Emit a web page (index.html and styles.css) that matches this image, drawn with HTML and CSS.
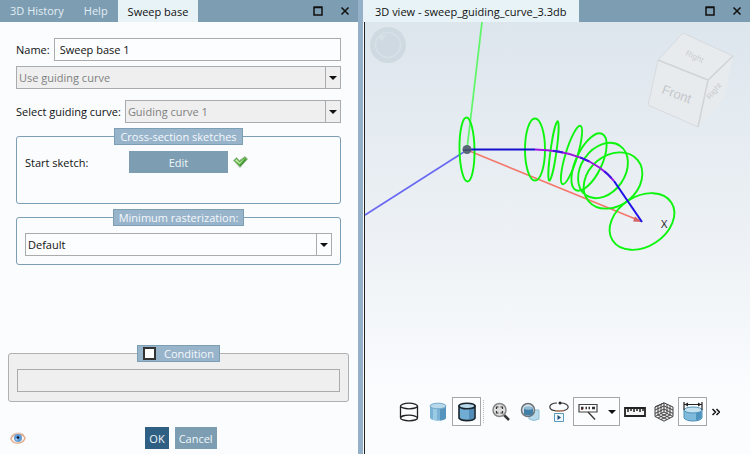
FILE: index.html
```
<!DOCTYPE html>
<html lang="en">

<head>
    <meta charset="UTF-8">
    <meta name="viewport" content="width=device-width, initial-scale=1.0">
    <title>Sweep base</title>
    <link rel="stylesheet" href="styles.css">
</head>

<body>
    <!-- Settings panel -->
    <section class="panel">
        <header class="tab-bar">
            <button class="tab">3D History</button>
            <button class="tab">Help</button>
            <button class="tab active">Sweep base</button>
            <div class="window-actions">
                <button class="window-btn" aria-label="Maximize">
                    <svg width="10" height="10" viewBox="0 0 10 10"><path d="M1 1.5H9V9H1ZM0.500 1H9.500" /></svg>
                </button>
                <button class="window-btn" aria-label="Close">
                    <svg width="10" height="10" viewBox="0 0 10 10"><path d="M1.500 1.500L8.500 8.500M8.500 1.500L1.500 8.500" /></svg>
                </button>
            </div>
        </header>

        <form class="form">
            <div class="row name-row">
                <label for="name">Name:</label>
                <input class="field" type="text" id="name" value="Sweep base 1">
            </div>

            <div class="combo">
                <select class="field" aria-label="Mode" disabled>
                    <option>Use guiding curve</option>
                </select>
                <span class="arrow"></span>
            </div>

            <div class="row curve-row">
                <label for="curve">Select guiding curve:</label>
                <div class="combo">
                    <select class="field" id="curve" disabled>
                        <option>Guiding curve 1</option>
                    </select>
                    <span class="arrow"></span>
                </div>
            </div>

            <fieldset class="group sketches">
                <legend>Cross-section sketches</legend>
                <div class="row">
                    <span class="sketch-label">Start sketch:</span>
                    <button type="button" class="btn edit-btn">Edit</button>
                    <svg class="check" width="15" height="12" viewBox="0 0 15 12">
                        <path d="M0.500 4.500L3.500 1.500L6.500 4.500L12 0.500L14.500 3L7 11.500Z" fill="#58ad45" stroke="#a4bd9e" />
                        <path d="M2 4.500L3.500 3L6.500 6.500L12 2L8 6.500L6.500 8Z" fill="#c5eaa9" />
                        <path d="M7 10L13 3.500" stroke="#34872c" fill="none" />
                    </svg>
                </div>
            </fieldset>

            <fieldset class="group raster">
                <legend id="rasterLabel">Minimum rasterization:</legend>
                <div class="combo">
                    <select class="field" aria-labelledby="rasterLabel">
                        <option>Default</option>
                    </select>
                    <span class="arrow"></span>
                </div>
            </fieldset>
        </form>

        <fieldset class="group condition">
            <legend>
                <input type="checkbox" id="condition">
                <label for="condition">Condition</label>
            </legend>
            <input class="field" type="text" aria-label="Condition value" disabled>
        </fieldset>

        <footer class="footer">
            <button class="eye" aria-label="Preview">
                <svg width="16" height="13" viewBox="0 0 16 13">
                    <path d="M0.800 7C3 0.500 12 0.500 15.200 6C12.500 12.500 4 13 0.800 7Z" fill="#fff6ef" stroke="#dfa681" stroke-width="1.300" />
                    <path d="M1 4.500C4 0 11 0 14 3" fill="none" stroke="#dec9bd" />
                    <circle cx="8" cy="6" r="4" fill="#609cd8" />
                    <circle cx="8" cy="5.500" r="1.300" fill="#101827" />
                    <circle cx="6.500" cy="7.500" r="1" fill="#a8cff2" />
                </svg>
            </button>
            <div class="footer-btns">
                <button class="btn ok-btn">OK</button>
                <button class="btn">Cancel</button>
            </div>
        </footer>
    </section>

    <!-- 3D view -->
    <section class="view">
        <header class="tab-bar">
            <button class="tab active">3D view - sweep_guiding_curve_3.3db</button>
            <div class="window-actions">
                <button class="window-btn" aria-label="Maximize">
                    <svg width="10" height="10" viewBox="0 0 10 10"><path d="M1 1.5H9V9H1ZM0.500 1H9.500" /></svg>
                </button>
                <button class="window-btn" aria-label="Close">
                    <svg width="10" height="10" viewBox="0 0 10 10"><path d="M1.500 1.500L8.500 8.500M8.500 1.500L1.500 8.500" /></svg>
                </button>
            </div>
        </header>

        <div class="canvas">
            <svg class="scene" width="385" height="260" viewBox="365 22 385 260">
                <!-- orbit control -->
                <circle cx="388" cy="45" r="18" fill="#ced9e1" />
                <circle cx="388" cy="45" r="12.500" fill="none" stroke="#d7e0e7" stroke-width="1.500" />
                <path d="M378 36L386 35L382 41Z" fill="#d7e0e7" />

                <!-- axes -->
                <path d="M482 22L467 149" stroke="#62f56c" stroke-width="1.800" />
                <path d="M467 150L365 215" stroke="#6868f2" stroke-width="1.600" />
                <path d="M467 150L638 220" stroke="#f4776c" stroke-width="1.600" />
                <path d="M642 222L633 221.500L635 216.500Z" fill="#d86068" />

                <!-- profiles along the curve -->
                <g fill="none" stroke="#0df50d" stroke-width="1.900">
                    <ellipse cx="467" cy="149.500" rx="7.500" ry="32" transform="rotate(-1 467 149.500)" />
                    <ellipse cx="535" cy="149.500" rx="10" ry="31" />
                    <ellipse cx="553.500" cy="151" rx="3" ry="30" transform="rotate(8 553.500 151)" />
                    <ellipse cx="571.500" cy="155" rx="6" ry="30.500" transform="rotate(17 571.500 155)" />
                    <ellipse cx="589" cy="162" rx="13" ry="31" transform="rotate(25 589 162)" />
                    <ellipse cx="603" cy="170.500" rx="22" ry="30" transform="rotate(35 603 170.500)" />
                    <ellipse cx="613" cy="180.500" rx="25" ry="32" transform="rotate(50 613 180.500)" />
                    <ellipse cx="642" cy="221.500" rx="25" ry="35" transform="rotate(57 642 221.500)" />
                </g>

                <!-- guiding curve -->
                <g fill="none" stroke-width="2">
                    <path d="M467 149.500H535" stroke="#1710cf" />
                    <path d="M535 149.500C568 150 597 160 614 181" stroke="#9d17e2" />
                    <path d="M535 149.500C568 150 597 160 614 181" stroke="#3518e2" stroke-dasharray="10 18" stroke-dashoffset="-18" />
                    <path d="M614 181L642 222" stroke="#1c11e8" />
                </g>
                <circle cx="467" cy="149.500" r="4.500" fill="#5b6876" />
                <path d="M463 150H471" stroke="#30366a" />
                <text class="axis-label" x="661" y="228">X</text>
            </svg>

            <svg class="cube" width="90" height="100" viewBox="648 30 90 100">
                <path d="M660 60L685 33L735 56L726 98L700 127L650 105Z" fill="#e8ebee" />
                <path d="M660 60L685 33L735 56M660 60L650 105L700 127" fill="none" stroke="#d7dbdf" />
                <path d="M660 60L710 80L735 56M710 80L700 127" fill="none" stroke="#d0d4d7" stroke-width="1.500" />
                <text class="cube-front" transform="translate(663 93) rotate(20)">Front</text>
                <text class="cube-side" transform="translate(687 55) rotate(25)">Right</text>
                <text class="cube-side" transform="translate(712 100) rotate(-50)">Right</text>
            </svg>

            <div class="toolbar">
                <button class="tool" aria-label="Wireframe">
                    <svg width="20" height="20" viewBox="0 0 20 20" fill="none" stroke="#222" stroke-width="1.300">
                        <path d="M1.500 4V16M18.500 4V16" />
                        <ellipse cx="10" cy="4" rx="8.500" ry="2.800" />
                        <ellipse cx="10" cy="16" rx="8.500" ry="2.800" />
                    </svg>
                </button>
                <button class="tool" aria-label="Shaded">
                    <svg width="20" height="20" viewBox="0 0 20 20">
                        <path d="M2 4V16C4 19.500 16 19.500 18 16V4Z" fill="#79b2d5" />
                        <path d="M12 5H18V16Q17 18 12 18.500Z" fill="#5794bd" />
                        <path d="M5 5H9V18H5Z" fill="#9bcae5" />
                        <ellipse cx="10" cy="4" rx="8" ry="2.800" fill="#b7d9eb" stroke="#76a9c9" />
                    </svg>
                </button>
                <button class="tool selected" aria-label="Shaded with edges">
                    <svg width="20" height="20" viewBox="0 0 20 20">
                        <path d="M2 4V16C4 19.500 16 19.500 18 16V4Z" fill="#71acd2" stroke="#19242c" stroke-width="1.600" />
                        <path d="M12 6H17V16Q16 17 12 17.500Z" fill="#518db8" />
                        <ellipse cx="10" cy="4" rx="8" ry="2.800" fill="#b7d9eb" stroke="#19242c" stroke-width="1.600" />
                    </svg>
                </button>
                <span class="separator"></span>
                <button class="tool" aria-label="Zoom to fit">
                    <svg width="20" height="20" viewBox="0 0 20 20" fill="none">
                        <path d="M12.500 12.500L18 18" stroke="#383838" stroke-width="2.500" />
                        <circle cx="8.500" cy="8" r="6.500" fill="#ddd" stroke="#888" stroke-width="1.500" />
                        <path d="M5.500 7V5H7.500M9.500 5H11.500V7M11.500 9V11H9.500M7.500 11H5.500V9" stroke="#333" stroke-width="1.200" />
                    </svg>
                </button>
                <button class="tool" aria-label="Transparency">
                    <svg width="20" height="20" viewBox="0 0 20 20">
                        <path d="M9 8H19V17Q14 20 9 17Z" fill="#b7d9e9" stroke="#91bfd5" />
                        <circle cx="8" cy="8" r="6.500" fill="#d7e2e8" stroke="#6d7479" stroke-width="1.500" />
                        <path d="M4 6V12Q8 15 13 12V6Z" fill="#427fa7" />
                        <ellipse cx="8.500" cy="6" rx="4.500" ry="1.800" fill="#8fbbd4" />
                    </svg>
                </button>
                <button class="tool" aria-label="Play rotation">
                    <svg width="20" height="22" viewBox="0 0 20 22" fill="none">
                        <path d="M8 2C3 2 0.800 4 0.800 6C0.800 8.500 5 10 10 10C15 10 19.200 8.500 19.200 6C19.200 4 16 2 12 2" stroke="#333" stroke-width="1.200" />
                        <path d="M6 10H15" stroke="#c98a69" stroke-width="1.200" />
                        <circle cx="11" cy="2" r="1.500" fill="#222" />
                        <path d="M5.500 12.500H14.500V20.500H5.500Z" fill="#edf7fc" stroke="#599bc0" />
                        <path d="M8.500 14V19L12 16.500Z" fill="#204d70" />
                    </svg>
                </button>
                <button class="tool wide selected" aria-label="Labels">
                    <svg width="20" height="18" viewBox="0 0 20 18" fill="none">
                        <path d="M1 1.500H19V9H1Z" fill="#fff" stroke="#444" stroke-width="1.200" />
                        <path d="M3 5H5.500M7.500 5H9M10.500 5H12M14 5H17" stroke="#333" stroke-width="2.500" />
                        <path d="M10 9L17 16.500" stroke="#333" stroke-width="1.300" />
                        <path d="M3 6.500H5" stroke="#a54b4b" />
                    </svg>
                    <span class="arrow-down"></span>
                </button>
                <button class="tool" aria-label="Measure">
                    <svg width="22" height="10" viewBox="0 0 22 10">
                        <path d="M1 1H21V9H1Z" fill="#f6f6f6" stroke="#222" stroke-width="1.800" />
                        <path d="M4 1V5M7 1V4M10 1V5M13 1V4M16 1V5M19 1V4" stroke="#222" stroke-width="1.500" />
                    </svg>
                </button>
                <button class="tool" aria-label="Grid">
                    <svg width="20" height="20" viewBox="0 0 20 20" fill="none" stroke="#444">
                        <path d="M10 0.800L19 5V14.500L10 19.200L1 14.500V5Z" fill="#eee" />
                        <path d="M10 1V10M1 14.500L10 10L19 14.500M1 5L10 1M4 3.500V13M7 2V11.500M13 2V11.500M16 3.500V13M1 8L10 4L19 8M1 11.500L10 7L19 11.500M4 16L13 11.500M7 17.500L16 13M7 11.500L16 16M4 13L13 17.500" />
                    </svg>
                </button>
                <button class="tool selected" aria-label="Dimensions">
                    <svg width="20" height="20" viewBox="0 0 20 20">
                        <path d="M1 8V16C3 20 17 20 19 16V8Z" fill="#7ebadb" stroke="#4f91b7" />
                        <path d="M13 10H18.500V15.500Q17 18 13 18.500Z" fill="#4f94bf" />
                        <ellipse cx="10" cy="8" rx="9" ry="3" fill="#c4e2f0" stroke="#4f91b7" />
                        <path d="M1 0V8M19 0V8M1 2.500H19" stroke="#222" stroke-width="1.200" />
                        <path d="M1.500 2.500L5 0.500V4.500ZM18.500 2.500L15 0.500V4.500Z" fill="#222" />
                    </svg>
                </button>
                <button class="tool more" aria-label="More tools">
                    <svg width="8" height="8" viewBox="0 0 8 8" fill="none" stroke="#111" stroke-width="1.500">
                        <path d="M0.500 1L3.500 4L0.500 7M4.500 1L7.500 4L4.500 7" />
                    </svg>
                </button>
            </div>
        </div>
    </section>
</body>

</html>
```
FILE: styles.css
```
* {
    box-sizing: border-box;
}

body {
    margin: 0;
    min-height: 100vh;
    display: grid;
    grid-template-columns: 363fr 387fr;
    font-family: "Open Sans", "Noto Sans", sans-serif;
    font-size: 11px;
    line-height: 15px;
    color: #111;
    background: #fafcfe;
}

button,
input,
select {
    font: inherit;
    color: inherit;
    margin: 0;
}

button {
    border: none;
    padding: 0;
    background: none;
}

.panel {
    display: flex;
    flex-direction: column;
    min-width: 0;
    border-right: 5px solid #95b1ca;
}

.view {
    display: flex;
    flex-direction: column;
    min-width: 0;
}

/* Tabs */
.tab-bar {
    display: flex;
    height: 22px;
    padding-bottom: 1px;
    background: #7c9db2;
}

.tab {
    padding: 0 10px;
    color: #e4eef4;
    white-space: nowrap;
}

.tab.active {
    margin-bottom: -1px;
    background: #e7f3f7;
    color: #111;
}

.view .tab {
    padding: 0 12px;
}

.window-actions {
    display: flex;
    gap: 17px;
    margin-left: auto;
    padding-right: 8px;
}

.window-btn {
    display: flex;
    align-items: center;
}

.window-btn svg {
    fill: none;
    stroke: #111;
    stroke-width: 1.5;
}

/* Form */
.form {
    padding: 16px 17px 0 16px;
}

.row {
    display: flex;
    align-items: center;
}

.name-row {
    gap: 4px;
    margin-bottom: 5px;
}

.curve-row {
    gap: 4px;
    margin-top: 11px;
    margin-bottom: 5px;
}

.field {
    display: block;
    width: 100%;
    min-width: 0;
    height: 23px;
    padding: 0 5px;
    border: 1px solid #a9abad;
    border-radius: 0;
    background: #fcfdfe;
    appearance: none;
}

select.field {
    padding: 0 2px;
}

.field:disabled {
    background: #efefef;
    color: #7f7f7f;
    opacity: 1;
}

.combo {
    position: relative;
    flex: 1;
    min-width: 0;
}

.arrow {
    position: absolute;
    top: 1px;
    right: 1px;
    bottom: 1px;
    width: 15px;
    display: flex;
    align-items: center;
    justify-content: center;
    border-left: 1px solid #a9abad;
    pointer-events: none;
}

.arrow::after,
.arrow-down {
    content: "";
    border: 4px solid transparent;
    border-top-color: #111;
    border-bottom: none;
}

.group {
    min-width: 0;
    margin: 0;
    padding: 0 8px;
    border: 1px solid #7c9fb5;
    border-radius: 3px;
}

.group legend {
    display: flex;
    align-items: center;
    height: 17px;
    margin: 0 auto;
    padding: 0 5px;
    border: 1px solid #7c9fb5;
    background: #98b4cb;
    color: #f4f8fb;
}

.sketches {
    height: 76px;
}

.sketches .row {
    padding-top: 6px;
}

.sketch-label {
    width: 104px;
}

.btn {
    height: 22px;
    padding: 0 4px;
    background: #7c9db2;
    color: #f1f6f9;
}

.edit-btn {
    width: 99px;
}

.check {
    margin-left: 5px;
}

.raster {
    margin-top: 5px;
    padding-bottom: 8px;
}

.raster .combo {
    margin-top: 7px;
}

.condition {
    margin: auto 9px 0 8px;
    padding-bottom: 9px;
    border-color: #b0b0b0;
    background: #efefef;
}

.group.condition legend {
    gap: 8px;
}

.condition .field {
    margin-top: 7px;
}

.condition input[type="checkbox"] {
    width: 13px;
    height: 13px;
    border: 2px solid #333;
    background: #fff;
    appearance: none;
}

.condition input[type="checkbox"]:checked {
    background: #2f5f83;
}

.footer {
    display: grid;
    grid-template-columns: 1fr auto 1fr;
    align-items: center;
    padding: 25px 6px 5px 10px;
}

.eye {
    display: flex;
}

.footer-btns {
    display: flex;
    gap: 6px;
}

.ok-btn {
    background: #2f5f83;
}

/* 3D canvas */
.canvas {
    position: relative;
    flex: 1;
    display: flex;
    align-items: flex-end;
    justify-content: center;
    min-height: 432px;
    padding: 0 0 28px 3px;
    margin-left: 1px;
    border-left: 1px solid #222;
    background: linear-gradient(#dde6ed, #edf1f5 50%, #fafcfe 85%);
    overflow: hidden;
}

.scene {
    position: absolute;
    top: 0;
    left: 0;
}

.cube {
    position: absolute;
    top: 8px;
    right: 14px;
}

.axis-label {
    font-size: 11px;
    fill: #222;
}

.cube-front {
    font-family: "Liberation Sans", sans-serif;
    font-size: 13px;
    fill: #c3c7cb;
}

.cube-side {
    font-family: "Liberation Sans", sans-serif;
    font-size: 8px;
    fill: #c8ccd0;
}

.toolbar {
    position: relative;
    display: flex;
    align-items: center;
}

.tool {
    display: flex;
    align-items: center;
    justify-content: center;
    width: 29px;
    height: 29px;
}

.tool.selected {
    border: 1px solid #a4a6a8;
    background: #fcfdfe;
}

.tool.wide {
    width: 47px;
    gap: 10px;
}

.tool.more {
    width: 17px;
}

.separator {
    height: 23px;
    margin: 0 2px;
    border-left: 1px dotted #b5b8ba;
}
```
